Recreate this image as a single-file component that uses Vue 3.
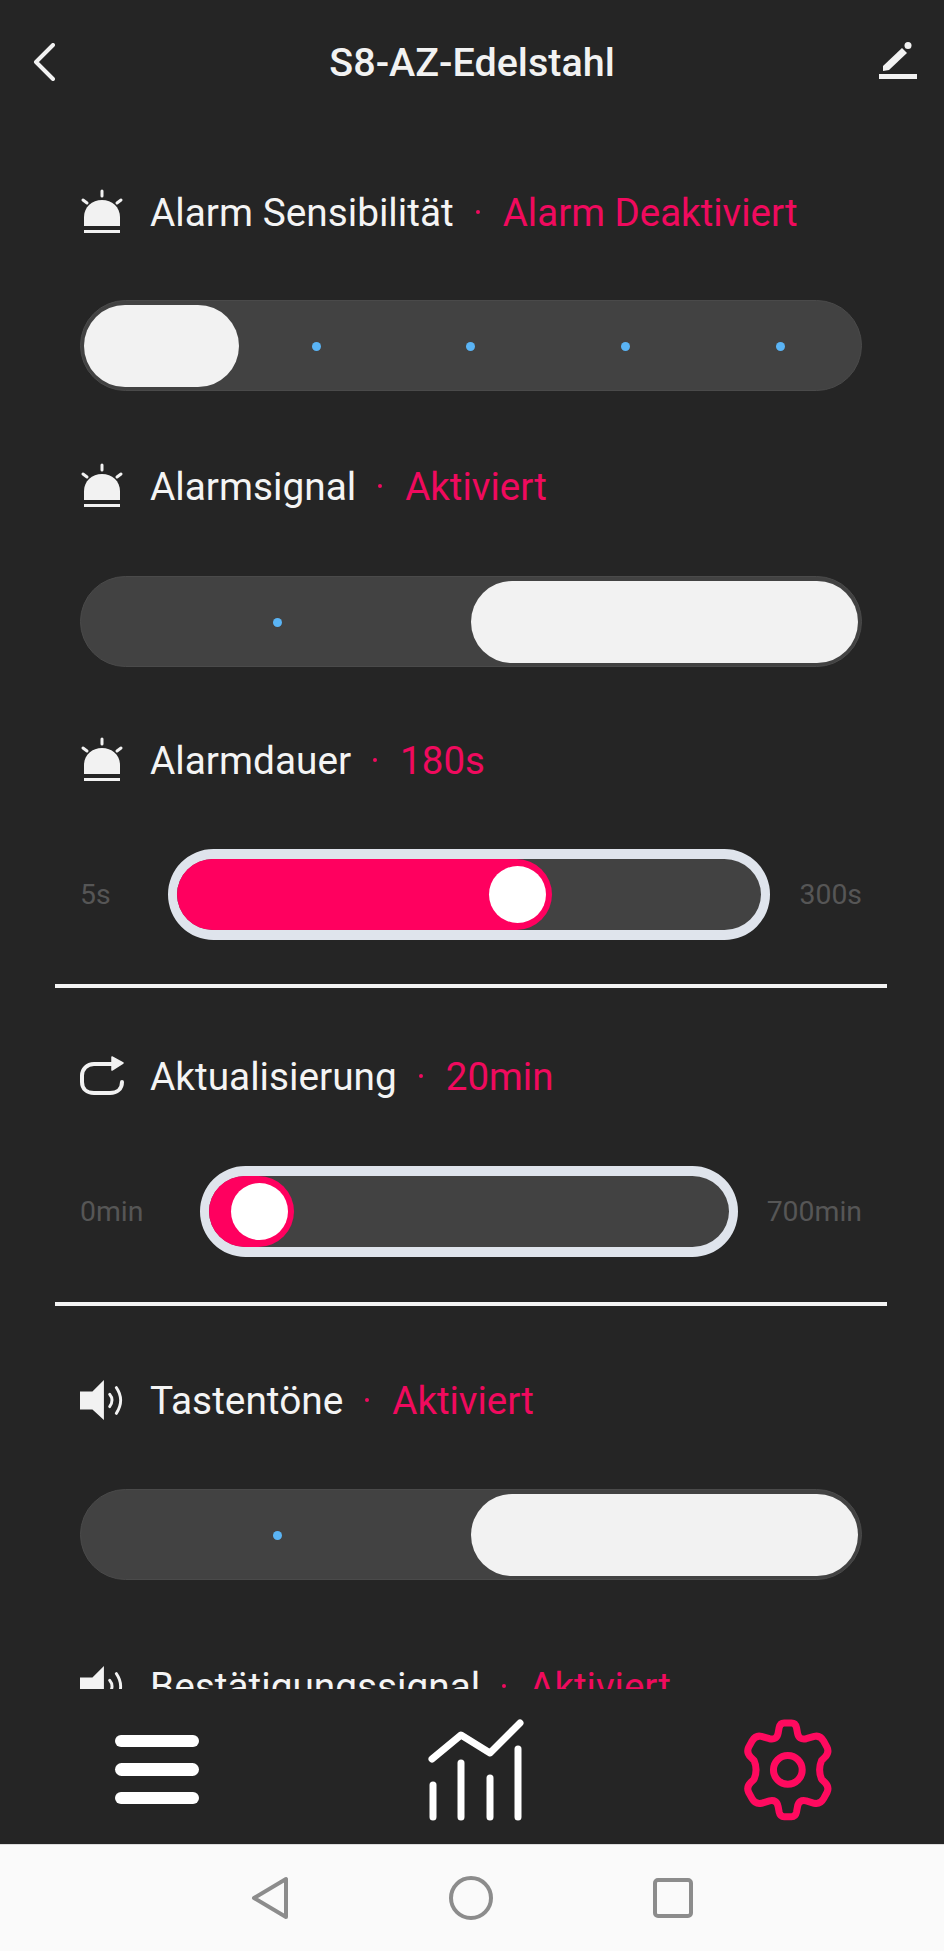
<script setup>
const alarmIcon = 'alarm'
const soundIcon = 'sound'

// each block: heading plus either a segmented switch or a range slider
const blocks = [
  { icon: alarmIcon, label: 'Alarm Sensibilität', value: 'Alarm Deaktiviert', type: 'seg', count: 5, active: 0 },
  { icon: alarmIcon, label: 'Alarmsignal', value: 'Aktiviert', type: 'seg', count: 2, active: 1 },
  { icon: alarmIcon, label: 'Alarmdauer', value: '180s', type: 'range', min: '5s', max: '300s', fill: 64.2, line: true },
  { icon: 'refresh', label: 'Aktualisierung', value: '20min', type: 'range', min: '0min', max: '700min', fill: 16.2, line: true },
  { icon: soundIcon, label: 'Tastentöne', value: 'Aktiviert', type: 'seg', count: 2, active: 1 },
  { icon: soundIcon, label: 'Bestätigungssignal', value: 'Aktiviert', type: 'seg', count: 2, active: 1 }
]
</script>

<template>
  <div class="page">
    <header class="top-bar">
      <svg class="back" width="22" height="38" viewBox="0 0 22 38" fill="none" stroke="#f2f2f2" stroke-width="4" stroke-linecap="round" stroke-linejoin="round">
        <polyline points="20,2 3,19 20,36"></polyline>
      </svg>
      <h1 class="title">S8-AZ-Edelstahl</h1>
      <svg class="edit" width="38" height="40" viewBox="0 0 38 40" fill="#f2f2f2">
        <polygon points="4,24 23,6 28,11 10,28 4,29"></polygon>
        <circle cx="29" cy="3.5" r="3.5"></circle>
        <rect x="0" y="32" width="38" height="5"></rect>
      </svg>
    </header>

    <main class="content">
      <section v-for="b in blocks" :key="b.label" class="block">
        <div class="heading">
          <svg v-if="b.icon === 'alarm'" class="icon" width="44" height="46" viewBox="0 0 44 46" fill="#f2f2f2">
            <path d="M4 37V28C4 18 12 11 22 11S40 18 40 28V37Z"></path>
            <rect x="4" y="41" width="36" height="3"></rect>
            <g stroke="#f2f2f2" stroke-width="3" stroke-linecap="round">
              <line x1="22" y1="2" x2="22" y2="7"></line>
              <line x1="3" y1="11" x2="7" y2="14"></line>
              <line x1="41" y1="11" x2="37" y2="14"></line>
            </g>
          </svg>
          <svg v-else-if="b.icon === 'refresh'" class="icon" width="44" height="40" viewBox="0 0 44 40" fill="none" stroke="#f2f2f2" stroke-width="4" stroke-linecap="round">
            <path d="M32 8H14C7 8 2 13 2 19.5V26C2 33 7 37 14 37H30C37 37 42 33 42 26"></path>
            <polygon points="32,1 43,7 32,14" fill="#f2f2f2" stroke-width="1.5" stroke-linejoin="round"></polygon>
          </svg>
          <svg v-else class="icon" width="46" height="42" viewBox="0 0 46 42" fill="none" stroke="#f2f2f2" stroke-width="3" stroke-linecap="round">
            <polygon points="0,12 13,12 25,0 25,42 13,31 0,31" fill="#f2f2f2" stroke="none"></polygon>
            <path d="M31 15Q36 21 31 28"></path>
            <path d="M38 8Q47 21 38 35"></path>
          </svg>
          <span class="label">{{ b.label }}</span>
          <span class="sep"></span>
          <span class="value">{{ b.value }}</span>
        </div>

        <div v-if="b.type === 'seg'" class="seg" :style="{ gridTemplateColumns: `repeat(${b.count}, 1fr)` }">
          <div v-for="(n, i) in b.count" :key="n" class="seg-cell">
            <div v-if="i === b.active" class="seg-thumb"></div>
            <span v-else class="seg-dot"></span>
          </div>
        </div>

        <div v-else class="range-row">
          <span class="range-min">{{ b.min }}</span>
          <div class="range">
            <div class="range-fill" :style="{ width: b.fill + '%' }">
              <span class="range-knob"></span>
            </div>
          </div>
          <span class="range-max">{{ b.max }}</span>
        </div>

        <div v-if="b.line" class="divider"></div>
      </section>
    </main>

    <nav class="tabs">
      <div class="tab">
        <div class="burger"><span></span><span></span><span></span></div>
      </div>
      <div class="tab">
        <svg class="chart" width="98" height="104" viewBox="0 0 98 104" fill="none" stroke="#fff" stroke-width="7" stroke-linecap="round" stroke-linejoin="round">
          <polyline points="5,40 34,16 63,34 93,4"></polyline>
          <line x1="6" y1="66" x2="6" y2="98"></line>
          <line x1="34" y1="44" x2="34" y2="98"></line>
          <line x1="63" y1="59" x2="63" y2="98"></line>
          <line x1="91" y1="30" x2="91" y2="98"></line>
        </svg>
      </div>
      <div class="tab">
        <svg class="gear" width="97" height="107" viewBox="60 50 290 320" fill="none" stroke="#ff0a5f" stroke-width="21" stroke-linejoin="round">
          <path d="M203 68H214Q226 68 229 82L232 98Q236 120 258 115L282 108Q300 104 310 122L320 140Q328 156 314 170L304 180Q292 208 304 236L314 246Q328 260 320 276L310 294Q300 312 282 308L258 301Q236 296 232 318L229 334Q226 348 214 348H192Q180 348 177 334L174 318Q170 296 148 301L124 308Q106 312 96 294L86 276Q78 260 92 246L102 236Q114 208 102 180L92 170Q78 156 86 140L96 122Q106 104 124 108L148 115Q170 120 174 98L177 82Q180 68 192 68Z"></path>
          <circle cx="203" cy="208" r="43"></circle>
        </svg>
      </div>
    </nav>

    <footer class="system-bar">
      <svg width="38" height="44" viewBox="0 0 38 44" fill="none" stroke="#8c8c8c" stroke-width="4" stroke-linejoin="round">
        <polygon points="35,3 35,41 3,22"></polygon>
      </svg>
      <svg width="44" height="44" viewBox="0 0 44 44" fill="none" stroke="#8c8c8c" stroke-width="4">
        <circle cx="22" cy="22" r="20"></circle>
      </svg>
      <svg width="40" height="40" viewBox="0 0 40 40" fill="none" stroke="#8c8c8c" stroke-width="4">
        <rect x="2" y="2" width="36" height="36" rx="3"></rect>
      </svg>
    </footer>
  </div>
</template>

<style>
html,
body {
  margin: 0;
  background: #252525;
}
</style>

<style scoped>
.page {
  width: 944px;
  height: 1951px;
  display: flex;
  flex-direction: column;
  background: #252525;
  font-family: Roboto, "Liberation Sans", sans-serif;
  overflow: hidden;
}

.top-bar {
  height: 124px;
  flex-shrink: 0;
  display: grid;
  grid-template-columns: 1fr auto 1fr;
  align-items: center;
  padding: 0 27px 0 33px;
  box-sizing: border-box;
}

.title {
  margin: 0 0 0 -6px;
  font-size: 39.5px;
  font-weight: 500;
  color: #f2f2f2;
}

.edit {
  justify-self: end;
}

.content {
  height: 1565px;
  flex-shrink: 0;
  overflow: hidden;
  padding: 0 82px 0 80px;
  box-sizing: border-box;
}

/* spacing differs slightly between the blocks in the original */
.block:nth-child(1) {
  margin-top: 63px;
}

.block:nth-child(2) {
  margin-top: 70px;
}

.block:nth-child(3) {
  margin-top: 68px;
}

.block:nth-child(4) {
  margin-top: 63px;
}

.block:nth-child(5) {
  margin-top: 69px;
}

.block:nth-child(6) {
  margin-top: 81px;
}

.heading {
  height: 50px;
  margin-bottom: 64px;
  display: flex;
  align-items: center;
  font-size: 38.8px;
  white-space: nowrap;
}

.block:nth-child(1) .heading {
  margin-bottom: 63px;
}

.block:nth-child(2) .heading,
.block:nth-child(4) .heading {
  margin-bottom: 65px;
}

.icon {
  width: 44px;
  margin-right: 26px;
  flex-shrink: 0;
}

.label {
  color: #f4f4f4;
}

.sep {
  width: 4px;
  height: 4px;
  margin: 0 23px 0 22px;
  border-radius: 50%;
  background: #f00a5e;
}

.value {
  font-size: 38.5px;
  color: #f00a5e;
}

.seg {
  height: 91px;
  box-sizing: border-box;
  display: grid;
  padding: 4px 3px 3px;
  border: 1px solid #4a4a4a;
  border-radius: 46px;
  background: #424242;
}

.seg-cell {
  display: flex;
  align-items: center;
  justify-content: center;
}

.seg-thumb {
  width: 100%;
  height: 100%;
  border-radius: 41px;
  background: #f2f2f2;
}

.seg-dot {
  width: 9px;
  height: 9px;
  border-radius: 50%;
  background: #5ab4f5;
}

.range-row {
  display: flex;
  align-items: center;
  justify-content: space-between;
  font-size: 28.4px;
  color: #565656;
}

.range-min {
  margin-right: 57px;
}

.range-max {
  margin-left: 29px;
}

.range {
  flex: 1;
  height: 91px;
  box-sizing: border-box;
  border: solid #dfe4ec;
  border-width: 10px 9px;
  border-radius: 46px;
  background: #424242;
}

.range-fill {
  position: relative;
  height: 100%;
  border-radius: 36px;
  background: #ff005f;
}

.range-knob {
  position: absolute;
  right: 6px;
  top: 7px;
  width: 57px;
  height: 57px;
  border-radius: 50%;
  background: #fff;
}

.divider {
  height: 4px;
  margin: 44px -25px 0;
  background: #f4f4f4;
}

.block:nth-child(4) .divider {
  margin-top: 45px;
}

.tabs {
  height: 155px;
  flex-shrink: 0;
  display: grid;
  grid-template-columns: repeat(3, 1fr);
  padding-top: 8px;
  box-sizing: border-box;
}

.tab {
  display: flex;
  align-items: center;
  justify-content: center;
}

.burger {
  width: 84px;
  margin-bottom: 2px;
  display: flex;
  flex-direction: column;
  gap: 16px;
}

.burger span {
  height: 12.5px;
  border-radius: 7px;
  background: #fff;
}

.chart {
  margin-left: 8px;
}

.gear {
  margin-left: 3px;
}

.system-bar {
  flex: 1;
  display: flex;
  align-items: center;
  justify-content: center;
  gap: 160px;
  background: #fafafa;
  border-top: 1px solid #dcdcdc;
}
</style>
